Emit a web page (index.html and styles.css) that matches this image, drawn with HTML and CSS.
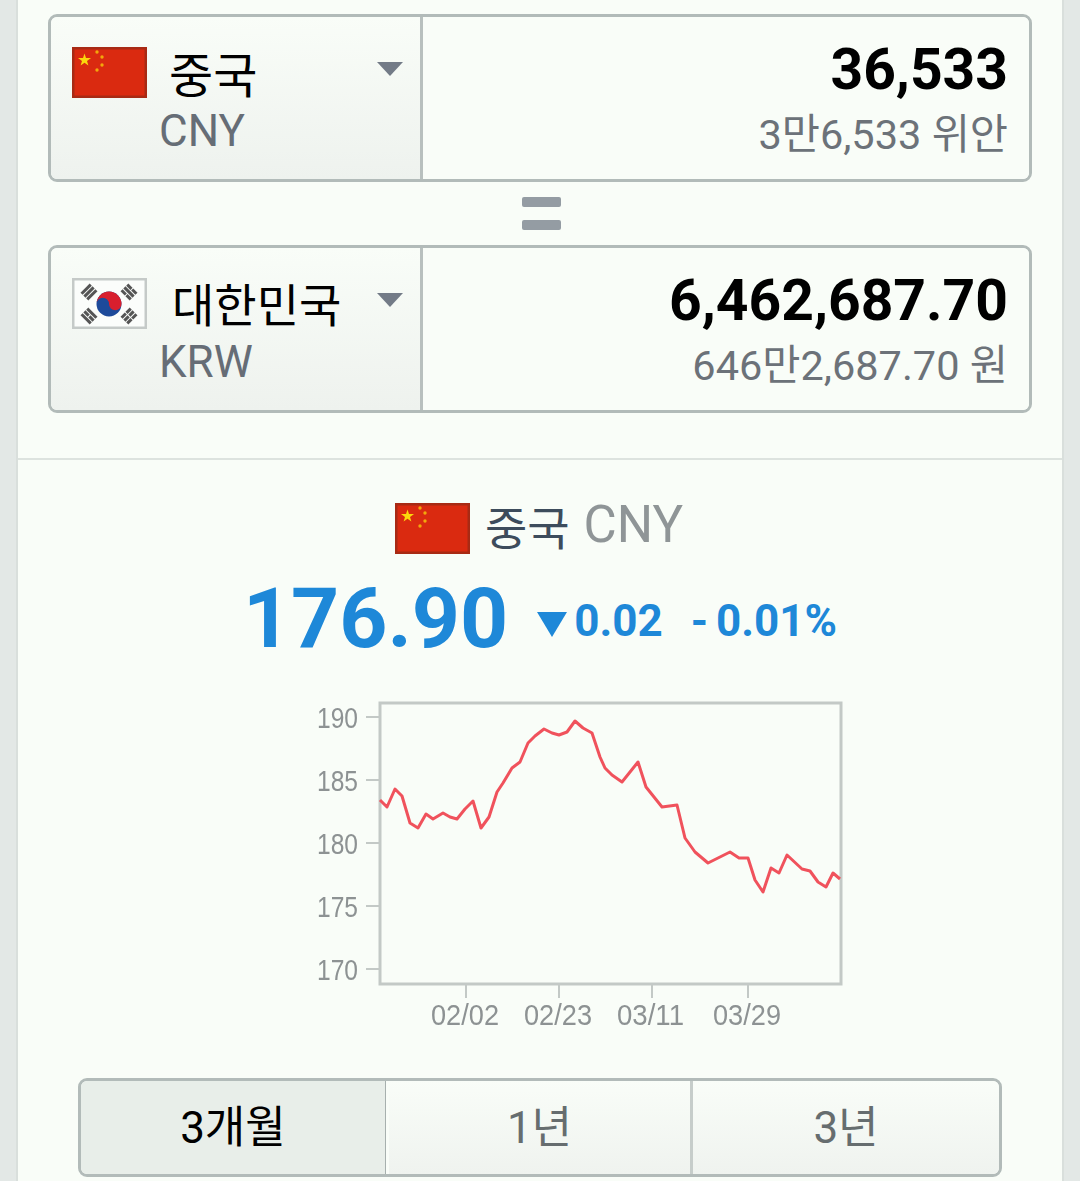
FILE: index.html
```html
<!DOCTYPE html>
<html lang="ko">
<head>
<meta charset="utf-8">
<title>환율</title>
<link rel="stylesheet" href="styles.css">
</head>
<body>
<svg class="defs" width="0" height="0" aria-hidden="true">
  <defs>
    <symbol id="flag-cn" viewBox="0 0 75 51">
      <rect width="75" height="51" fill="#a82a14"/>
      <rect x="2.500" y="2.500" width="70" height="46" fill="#da2a10"/>
      <polygon points="12.500,6.500 14,11 19,11 15,14 16.400,18.500 12.500,15.800 8.600,18.500 10,14 6,11 11,11" fill="#fbd80c"/>
      <circle cx="25" cy="5" r="1.700" fill="#f2a80c"/>
      <circle cx="30" cy="10" r="1.700" fill="#f2a80c"/>
      <circle cx="30" cy="18" r="1.700" fill="#f2a80c"/>
      <circle cx="25" cy="23" r="1.700" fill="#f2a80c"/>
    </symbol>
    <symbol id="flag-kr" viewBox="0 0 75 51">
      <rect width="75" height="51" fill="#c5cac8"/>
      <rect x="2.500" y="2.500" width="70" height="46" fill="#fbfdfb"/>
      <circle cx="37" cy="26" r="12.500" fill="#1d4a9a"/>
      <path d="M24.500 26a12.500 12.500 0 0 1 25 0a6.250 6.250 0 0 1-12.500 0a6.250 6.250 0 0 0-12.500 0z" fill="#d81f2e"/>
      <g fill="#555">
        <g transform="translate(17 14) rotate(-45)"><rect x="-6.500" y="-5.500" width="13" height="3"/><rect x="-6.500" y="-1.500" width="13" height="3"/><rect x="-6.500" y="2.500" width="13" height="3"/></g>
        <g transform="translate(57 14) rotate(45)"><rect x="-6.500" y="-5.500" width="6" height="3"/><rect x="0.500" y="-5.500" width="6" height="3"/><rect x="-6.500" y="-1.500" width="13" height="3"/><rect x="-6.500" y="2.500" width="6" height="3"/><rect x="0.500" y="2.500" width="6" height="3"/></g>
        <g transform="translate(17 38) rotate(45)"><rect x="-6.500" y="-5.500" width="13" height="3"/><rect x="-6.500" y="-1.500" width="6" height="3"/><rect x="0.500" y="-1.500" width="6" height="3"/><rect x="-6.500" y="2.500" width="13" height="3"/></g>
        <g transform="translate(57 38) rotate(-45)"><rect x="-6.500" y="-5.500" width="6" height="3"/><rect x="0.500" y="-5.500" width="6" height="3"/><rect x="-6.500" y="-1.500" width="6" height="3"/><rect x="0.500" y="-1.500" width="6" height="3"/><rect x="-6.500" y="2.500" width="6" height="3"/><rect x="0.500" y="2.500" width="6" height="3"/></g>
      </g>
    </symbol>
  </defs>
</svg>
<main class="page">
  <section class="converter">
    <div class="currency-box">
      <div class="picker">
        <div class="picker-top">
          <svg class="flag"><use href="#flag-cn"/></svg>
          <span class="country country-cn">중국</span>
          <span class="caret"></span>
        </div>
        <div class="code">CNY</div>
      </div>
      <div class="amount">
        <div class="amount-main">36,533</div>
        <div class="amount-sub">3만6,533 위안</div>
      </div>
    </div>
    <div class="equals"><span></span><span></span></div>
    <div class="currency-box">
      <div class="picker">
        <div class="picker-top">
          <svg class="flag"><use href="#flag-kr"/></svg>
          <span class="country country-kr">대한민국</span>
          <span class="caret"></span>
        </div>
        <div class="code">KRW</div>
      </div>
      <div class="amount">
        <div class="amount-main">6,462,687.70</div>
        <div class="amount-sub">646만2,687.70 원</div>
      </div>
    </div>
  </section>
  <section class="rate">
    <h2 class="rate-title">
      <svg class="flag"><use href="#flag-cn"/></svg>
      <span class="rate-name">중국</span>
      <span class="rate-code">CNY</span>
    </h2>
    <div class="rate-values">
      <span class="rate-price">176.90</span>
      <span class="rate-down"></span>
      <span class="rate-delta">0.02</span>
      <span class="rate-pct">- 0.01%</span>
    </div>
    <svg class="chart" width="1044" height="345" viewBox="18 690 1044 345">
      <rect class="chart-frame" x="380" y="703" width="461" height="281"/>
      <path class="chart-ticks" d="M366 717h14M366 780h14M366 843h14M366 906h14M366 969h14M466 985v13M559 985v13M652 985v13M748 985v13"/>
      <g class="chart-y">
        <text x="358" y="728" textLength="41" lengthAdjust="spacingAndGlyphs">190</text>
        <text x="358" y="791" textLength="41" lengthAdjust="spacingAndGlyphs">185</text>
        <text x="358" y="854" textLength="41" lengthAdjust="spacingAndGlyphs">180</text>
        <text x="358" y="917" textLength="41" lengthAdjust="spacingAndGlyphs">175</text>
        <text x="358" y="980" textLength="41" lengthAdjust="spacingAndGlyphs">170</text>
      </g>
      <g class="chart-x">
        <text x="431" y="1025" textLength="68" lengthAdjust="spacingAndGlyphs">02/02</text>
        <text x="524" y="1025" textLength="68" lengthAdjust="spacingAndGlyphs">02/23</text>
        <text x="617" y="1025" textLength="67" lengthAdjust="spacingAndGlyphs">03/11</text>
        <text x="713" y="1025" textLength="68" lengthAdjust="spacingAndGlyphs">03/29</text>
      </g>
      <polyline class="chart-line" points="380,800 387,807 395,789 402,796 410,823 418,828 426,814 433,819 443,813 450,817 457,819 465,809 473,801 481,828 489,817 497,792 503,783 512,768 520,762 528,743 535,736 544,729 552,733 559,735 567,732 575,721 583,728 592,733 600,757 605,768 612,775 622,782 638,762 646,787 662,807 677,805 685,838 695,852 708,863 730,852 739,858 748,858 755,880 763,892 771,868 779,873 787,855 802,869 810,871 818,882 826,887 833,873 840,879"/>
    </svg>
    <div class="tabs">
      <div class="tab tab-active">3개월</div>
      <div class="tab tab-mid">1년</div>
      <div class="tab">3년</div>
    </div>
  </section>
</main>
</body>
</html>
```

FILE: styles.css
```css
* { box-sizing: border-box; }
html, body { margin: 0; padding: 0; }
body {
  height: 1181px;
  overflow: hidden;
  background: #e3e8e6;
  font-family: Roboto, "Noto Sans CJK KR", sans-serif;
}
.defs { position: absolute; }
.page {
  margin: 0 16px;
  height: 1181px;
  background: #f9fdf8;
  border-left: 2px solid #d9dfdc;
  border-right: 2px solid #d9dfdc;
}
.converter {
  padding: 14px 30px 45px;
  border-bottom: 2px solid #dde3df;
}
.currency-box {
  display: flex;
  height: 168px;
  border: 3px solid #b2bbb9;
  border-radius: 9px;
  overflow: hidden;
}
.picker {
  width: 372px;
  padding: 30px 17px 0 21px;
  border-right: 3px solid #b8c0be;
  background: linear-gradient(#f9fdf8, #eef2ee);
}
.picker-top {
  display: flex;
  align-items: flex-start;
}
.flag { width: 75px; height: 51px; flex: none; display: block; }
.country {
  font-size: 48px;
  line-height: 60px;
  color: #000;
  margin-left: 22px;
}
.country-kr { margin: -2px 0 2px 25px; font-size: 46px; }
.caret {
  margin-left: auto;
  margin-top: 15px;
  border-style: solid;
  border-width: 14px 13px 0;
  border-color: #737b87 transparent transparent;
}
.code {
  font-size: 44px;
  line-height: 52px;
  color: #666d76;
  margin: -2px 0 0 87px;
}
.amount {
  flex: 1;
  padding: 18px 21px 0 0;
  text-align: right;
  background: #f9fdf8;
}
.amount-main {
  font-size: 57px;
  line-height: 70px;
  font-weight: 700;
  color: #000;
}
.amount-sub {
  font-size: 41.500px;
  line-height: 60px;
  color: #6c7279;
}
.equals {
  display: flex;
  flex-direction: column;
  align-items: center;
  gap: 13px;
  height: 63px;
  padding: 15px 0 0 2px;
}
.equals span {
  width: 39px;
  height: 10px;
  border-radius: 2px;
  background: #949ca3;
}
.rate { padding-top: 43px; }
.rate-title {
  margin: 0;
  display: flex;
  align-items: center;
  justify-content: center;
  height: 51px;
  padding-right: 2px;
  font-size: 46px;
  font-weight: 400;
}
.rate-name { color: #3d4c5c; margin: 0 0 8px 15px; }
.rate-code { color: #8f9597; margin: 0 0 8px 14px; font-size: 51px; line-height: 60px; }
.rate-values {
  display: flex;
  align-items: center;
  justify-content: center;
  margin-top: 15px;
  color: #1e88d8;
  font-weight: 700;
}
.rate-price { font-size: 84px; line-height: 100px; }
.rate-down {
  width: 0;
  height: 0;
  margin: 10px 7px 0 29px;
  border-style: solid;
  border-width: 25px 15.500px 0;
  border-color: #1e88d8 transparent transparent;
}
.rate-delta, .rate-pct { font-size: 44px; line-height: 60px; margin-top: 4px; }
.rate-pct { margin-left: 28px; word-spacing: -3px; }
.chart { display: block; margin-top: 21px; filter: blur(0.5px); }
.chart-frame { fill: #f9fdf8; stroke: #c3c9c6; stroke-width: 3; }
.chart-ticks { fill: none; stroke: #c3c9c6; stroke-width: 2; }
.chart-line { fill: none; stroke: #f0525c; stroke-width: 3; stroke-linejoin: round; }
.chart-y text, .chart-x text {
  font-family: "Liberation Sans", sans-serif;
  font-size: 29px;
  fill: #8d9293;
}
.chart-y text { text-anchor: end; }
.tabs {
  display: flex;
  height: 99px;
  margin: 43px 60px 0;
  border: 3px solid #b2bbb9;
  border-radius: 9px;
  overflow: hidden;
}
.tab {
  flex: 1;
  display: flex;
  align-items: center;
  justify-content: center;
  padding-bottom: 8px;
  font-size: 44px;
  color: #666d6f;
  background: linear-gradient(#f9fdf8, #eff3ef);
  border-left: 3px solid #c6cdca;
}
.tab:first-child { border-left: 0; }
.tab-active {
  color: #000;
  background: #e8eee9;
  border-right: 1px solid #a7b0ae;
  flex: none;
  width: 305px;
}
.tab-active + .tab { border-left: 3px solid #f9fdf8; }
.tab-mid { flex: none; width: 304px; }
```
